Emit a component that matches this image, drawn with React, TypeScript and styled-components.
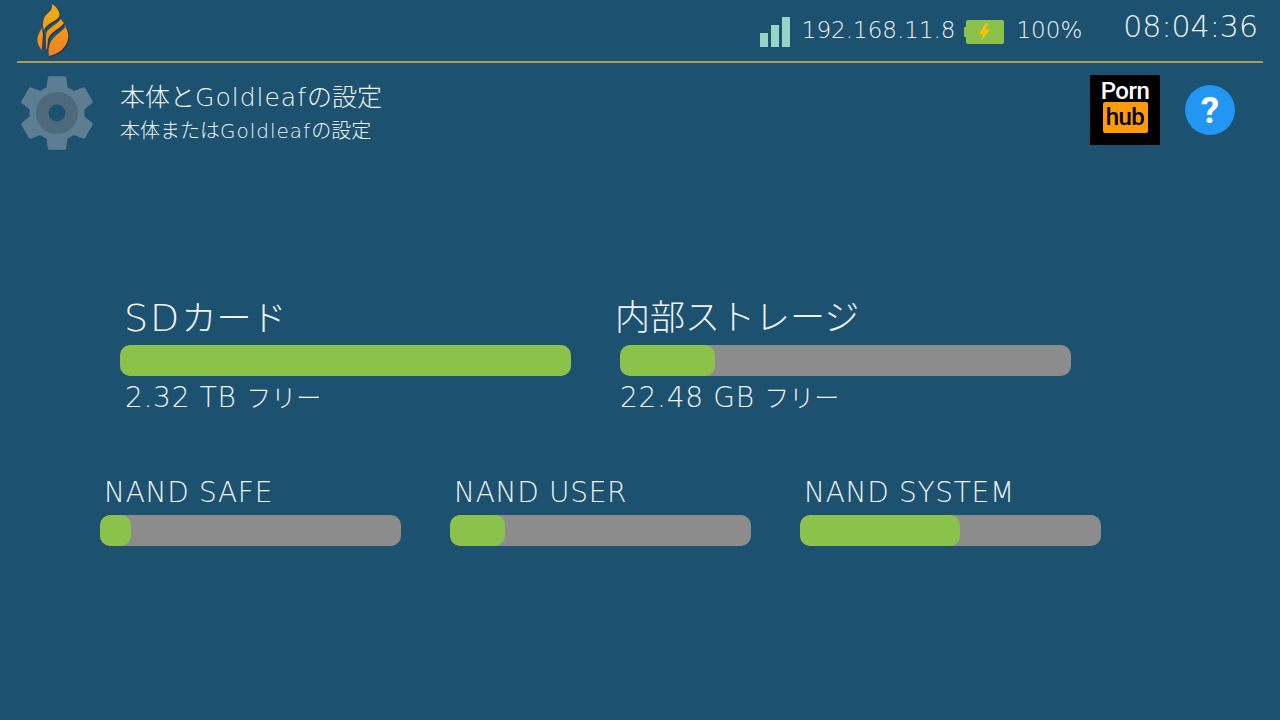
import styled, { createGlobalStyle } from 'styled-components'

const GlobalStyle = createGlobalStyle`
  html, body {
    margin: 0;
    padding: 0;
    background: #1c5170;
  }
`

const Screen = styled.div`
  width: 1280px;
  height: 720px;
  overflow: hidden;
  background: #1c5170;
  color: #f0f4f6;
  font-family: "DejaVu Sans", "Noto Sans CJK JP", sans-serif;
  font-weight: 200;
`

const TopBar = styled.header`
  display: flex;
  align-items: center;
  height: 61px;
  margin: 0 17px;
  padding: 0 5px 0 20px;
  box-sizing: content-box;
  border-bottom: 2px solid #b5984f;
`

const Logo = styled.svg`
  width: 32px;
  height: 54px;
  margin-right: auto;
  overflow: visible;
  filter: drop-shadow(1px 1px 0.5px #26343d);
`

const SignalIcon = styled.svg`
  width: 30px;
  height: 30px;
  margin-top: 2px;
`

const StatusText = styled.span`
  font-size: 23px;
  margin-top: -1px;
`

const IpText = styled(StatusText)`
  margin-left: 12px;
`

const Battery = styled.svg`
  width: 40px;
  height: 24px;
  margin: 3px 12px 0 9px;
`

const Clock = styled.span`
  font-size: 30px;
  margin: -8px 0 0 41px;
`

const MenuRow = styled.section`
  display: flex;
  align-items: center;
  height: 94px;
  padding: 0 45px 0 11px;
`

const GearIcon = styled.svg`
  width: 92px;
  height: 92px;
  flex: none;
  margin-top: 6px;
`

const Heading = styled.div`
  display: flex;
  flex-direction: column;
  gap: 6px;
  margin: 6px auto 0 17px;
`

const HeadingTitle = styled.div`
  font-size: 25px;
  line-height: 30px;
`

const HeadingSub = styled.div`
  font-size: 20px;
  line-height: 24px;
`

const Latin = styled.span`
  letter-spacing: 1px;
`

const BrandTile = styled.div`
  display: flex;
  flex-direction: column;
  align-items: center;
  width: 70px;
  height: 70px;
  padding-top: 6px;
  box-sizing: border-box;
  background: #000;
  font-family: Roboto, "Liberation Sans", sans-serif;
  font-weight: 500;
  letter-spacing: -0.5px;
`

const BrandTop = styled.span`
  color: #fff;
  font-size: 24px;
  line-height: 21px;
`

const BrandBottom = styled.span`
  width: 45px;
  height: 31px;
  border-radius: 2px;
  background: #ff9a0a;
  color: #000;
  font-size: 24px;
  line-height: 30px;
  text-align: center;
`

const HelpIcon = styled.div`
  display: flex;
  align-items: center;
  justify-content: center;
  width: 50px;
  height: 50px;
  margin-left: 25px;
  border-radius: 50%;
  background: #2196f3;
  color: #fff;
  font-family: Roboto, "Liberation Sans", sans-serif;
  font-size: 37px;
  font-weight: 700;
`

const DriveRow = styled.div`
  display: flex;
  gap: 49px;
  padding-left: 120px;
  margin-top: 138px;
`

const NandRow = styled.div`
  display: flex;
  gap: 49px;
  padding-left: 100px;
  margin-top: 61px;
`

const Meter = styled.div<{ $width: number }>`
  width: ${props => props.$width}px;
`

const DriveLabel = styled.div<{ $shift: number }>`
  height: 46px;
  font-size: 35px;
  line-height: 46px;
  margin: 0 0 4px ${props => props.$shift}px;
  white-space: nowrap;
`

const DriveLatin = styled.span`
  font-size: 38px;
  letter-spacing: 2px;
`

const NandLabel = styled.div`
  font-size: 28px;
  letter-spacing: 0.7px;
  line-height: 34px;
  padding-left: 4px;
  margin-bottom: 5px;
  white-space: nowrap;
`

const FreeText = styled.div<{ $indent: number }>`
  height: 34px;
  margin-top: 5px;
  font-size: 28px;
  letter-spacing: 0.7px;
  line-height: 34px;
  padding-left: ${props => props.$indent}px;
`

const FreeKana = styled.span`
  font-size: 25px;
  letter-spacing: 0;
`

const Track = styled.div`
  height: 31px;
  border-radius: 10px;
  background: #8c8c8c;
  overflow: hidden;
`

const Fill = styled.div`
  height: 100%;
  border-radius: 10px;
  background: #8bc34a;
`

const drives = [
  { latin: 'SD', label: 'カード', free: '2.32 TB ', percent: 100, shift: 4, freeIndent: 5 },
  { latin: '', label: '内部ストレージ', free: '22.48 GB ', percent: 21, shift: -5, freeIndent: 0 },
]

const nands = [
  { label: 'NAND SAFE', percent: 10.3 },
  { label: 'NAND USER', percent: 18.3 },
  { label: 'NAND SYSTEM', percent: 53.2 },
]

export default function App() {
  return (
    <Screen>
      <GlobalStyle />
      <TopBar>
        <Logo viewBox="0 0 32 54">
          <defs>
            <linearGradient id="flame" x1="0" y1="0" x2="0" y2="52" gradientUnits="userSpaceOnUse">
              <stop offset="0" stopColor="#eeb10f" />
              <stop offset="1" stopColor="#f47f26" />
            </linearGradient>
          </defs>
          <path d="M15 0C21 4 24 10 22 13C18 18 10 19 7 26C5 21 6 15 9 11C12 8 16 6 15 0Z" fill="url(#flame)" />
          <path d="M24 15C25 17 26 18 27 19C22 26 12 28 11 36L10 46L9 44L9 30C10 24 20 21 24 15Z" fill="url(#flame)" />
          <path d="M5 24C5 27 6 28 6 30L5 46L7 48C2 44 -1 38 1 32C2 29 3 27 5 24Z" fill="url(#flame)" />
          <path d="M27 21C31 26 32 31 31 35C29 44 22 50 12 52C11 46 12 40 15 36C19 30 26 27 29 22Z" fill="url(#flame)" />
        </Logo>
        <SignalIcon viewBox="0 0 30 30" fill="#93d6c8">
          <rect x="0" y="16" width="8" height="14" />
          <rect x="11" y="8" width="8" height="22" />
          <rect x="22" y="0" width="8" height="30" />
        </SignalIcon>
        <IpText>192.168.11.8</IpText>
        <Battery viewBox="0 0 40 24">
          <rect x="0" y="7" width="3" height="10" rx="1" fill="#8bc34a" />
          <rect x="2" y="0" width="38" height="24" rx="2" fill="#8bc34a" />
          <path d="M22 3L15 14H19L17 21L26 9.5H21.5L24 3Z" fill="#ffc107" />
        </Battery>
        <StatusText>100%</StatusText>
        <Clock>08:04:36</Clock>
      </TopBar>
      <MenuRow>
        <GearIcon viewBox="0 0 24 24">
          <path
            fill="#5d7d92"
            d="M19.14 12.94c.04-.3.06-.61.06-.94 0-.32-.02-.64-.07-.94l2.03-1.58a.49.49 0 0 0 .12-.61l-1.92-3.32a.488.488 0 0 0-.59-.22l-2.39.96c-.5-.38-1.03-.7-1.62-.94l-.36-2.54a.484.484 0 0 0-.48-.41h-3.84c-.24 0-.43.17-.47.41l-.36 2.54c-.59.24-1.13.57-1.62.94l-2.39-.96c-.22-.08-.47 0-.59.22L2.74 8.87c-.12.21-.08.47.12.61l2.03 1.58c-.05.3-.09.63-.09.94s.02.64.07.94l-2.03 1.58a.49.49 0 0 0-.12.61l1.92 3.32c.12.22.37.29.59.22l2.39-.96c.5.38 1.03.7 1.62.94l.36 2.54c.05.24.24.41.48.41h3.84c.24 0 .44-.17.47-.41l.36-2.54c.59-.24 1.13-.56 1.62-.94l2.39.96c.22.08.47 0 .59-.22l1.92-3.32c.12-.22.07-.47-.12-.61l-2.01-1.58z"
          />
          <circle cx="12" cy="12" r="5.5" fill="#4d6a7c" />
          <circle cx="12" cy="12" r="2.2" fill="#1c5170" />
        </GearIcon>
        <Heading>
          <HeadingTitle>
            本体と<Latin>Goldleaf</Latin>の設定
          </HeadingTitle>
          <HeadingSub>
            本体または<Latin>Goldleaf</Latin>の設定
          </HeadingSub>
        </Heading>
        <BrandTile>
          <BrandTop>Porn</BrandTop>
          <BrandBottom>hub</BrandBottom>
        </BrandTile>
        <HelpIcon>?</HelpIcon>
      </MenuRow>
      <DriveRow>
        {drives.map(drive => (
          <Meter $width={451} key={drive.label}>
            <DriveLabel $shift={drive.shift}>
              {drive.latin && <DriveLatin>{drive.latin}</DriveLatin>}
              {drive.label}
            </DriveLabel>
            <Track>
              <Fill style={{ width: `${drive.percent}%` }} />
            </Track>
            <FreeText $indent={drive.freeIndent}>
              {drive.free}
              <FreeKana>フリー</FreeKana>
            </FreeText>
          </Meter>
        ))}
      </DriveRow>
      <NandRow>
        {nands.map(nand => (
          <Meter $width={301} key={nand.label}>
            <NandLabel>{nand.label}</NandLabel>
            <Track>
              <Fill style={{ width: `${nand.percent}%` }} />
            </Track>
          </Meter>
        ))}
      </NandRow>
    </Screen>
  )
}
